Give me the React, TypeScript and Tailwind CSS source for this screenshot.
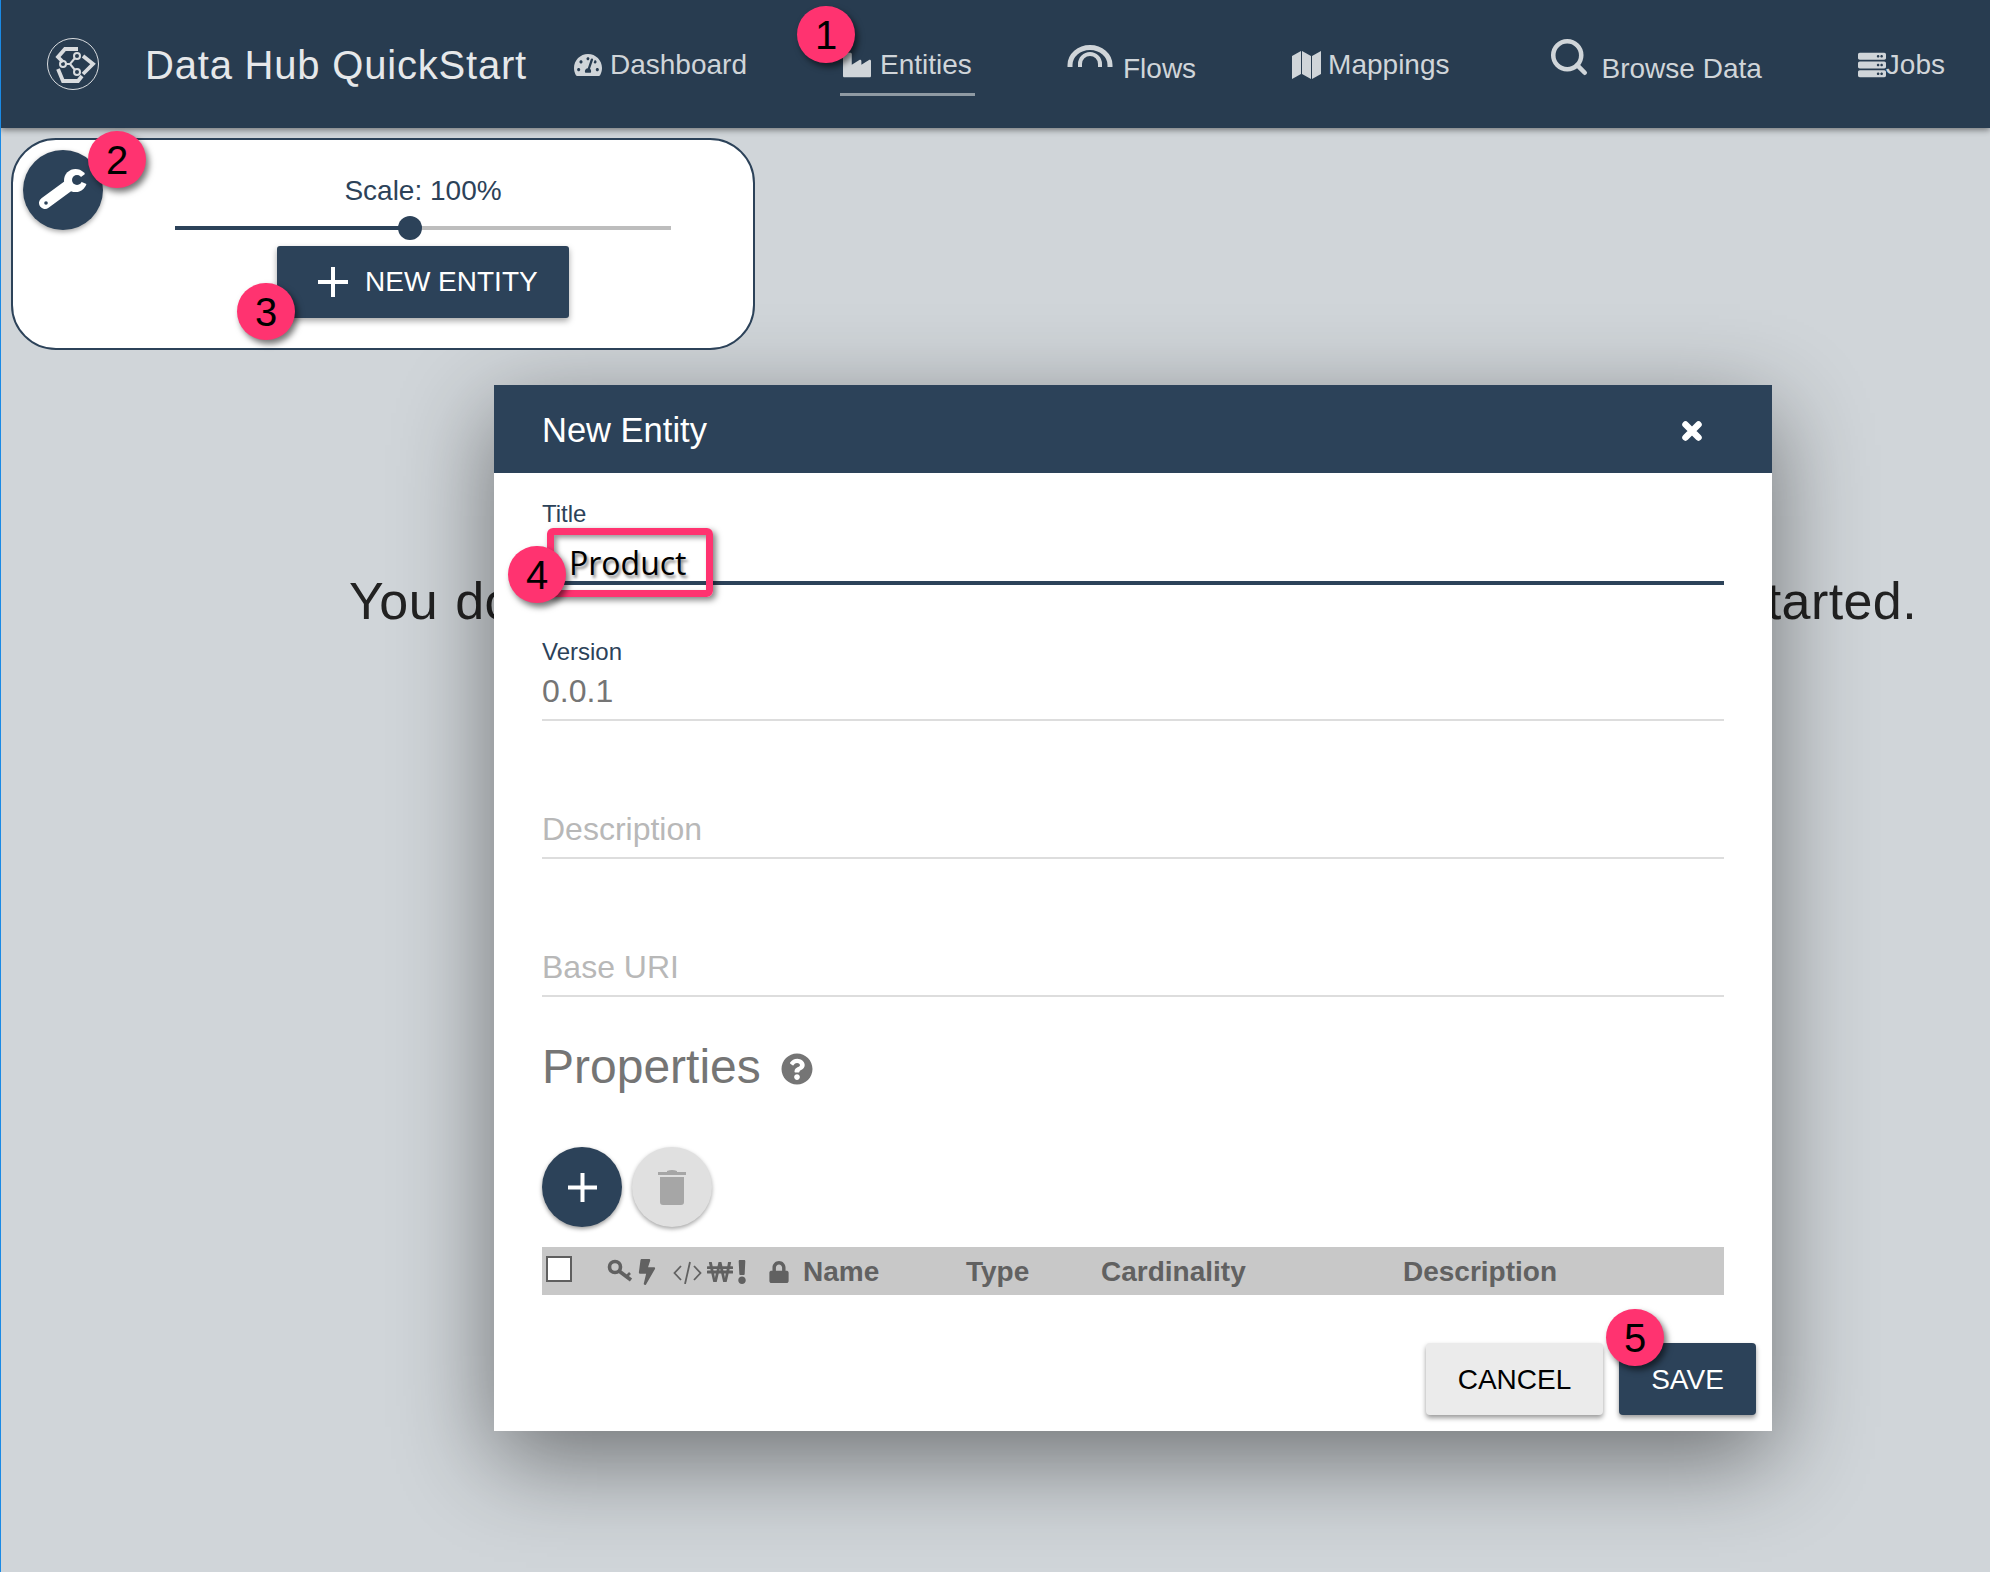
import { Search } from "lucide-react";
import {
  FaBolt,
  FaExclamation,
  FaIndustry,
  FaLock,
  FaQuestionCircle,
  FaServer,
  FaTachometerAlt,
  FaWonSign,
} from "react-icons/fa";

const Badge = ({ n, className }: { n: number; className: string }) => (
  <div
    className={`absolute z-30 w-[58px] h-[57px] rounded-full bg-[#ff3370] flex items-center justify-center text-[40px] leading-none text-black shadow-[3px_4px_6px_rgba(0,0,0,0.55)] ${className}`}
  >
    {n}
  </div>
);

const PlusMark = ({ size, thick }: { size: number; thick: number }) => (
  <svg width={size} height={size} viewBox={`0 0 ${size} ${size}`} fill="#ffffff">
    <rect x={0} y={(size - thick) / 2} width={size} height={thick} />
    <rect x={(size - thick) / 2} y={0} width={thick} height={size} />
  </svg>
);

const Logo = () => (
  <svg width="52" height="52" viewBox="0 0 52 52" fill="none" stroke="#d9dcdf" className="ml-[46px] mb-[2px] shrink-0">
    <circle cx="26" cy="26" r="25.5" strokeWidth="1" />
    <g strokeWidth="3.8">
      <path d="M16 24 L11 19 L18 11 H31" />
      <path d="M36 18 L46 26 L36 36" />
      <path d="M11 31 L16 43 H31 L35 38" />
    </g>
    <g strokeWidth="2">
      <circle cx="30" cy="18" r="3" />
      <circle cx="16" cy="26" r="3" />
      <circle cx="30" cy="34" r="3" />
      <path d="M19 26 H23 L28 20 M23 26 L28 32" />
    </g>
  </svg>
);

const FlowsIcon = () => (
  <svg width="46" height="22" viewBox="0 0 46 22" fill="none" stroke="#d0d5d9" className="mb-[18px] shrink-0">
    <path d="M3 22 V20 A20 17.5 0 0 1 43 20 V22" strokeWidth="5" />
    <path d="M13 22 V19 A10 10 0 0 1 33 19 V22" strokeWidth="4" />
  </svg>
);

const MapIcon = () => (
  <svg width="29" height="28" viewBox="0 0 29 28" fill="#d0d5d9" className="shrink-0">
    <path d="M0 5 L9 0 V23 L0 28 Z" />
    <path d="M10 0 L19 5 V28 L10 23 Z" />
    <path d="M20 5 L29 0 V23 L20 28 Z" />
  </svg>
);

const WrenchIcon = () => (
  <svg width="48" height="41" viewBox="0 0 48 41" className="mb-[2px]">
    <path d="M36 12 L6 34" stroke="#ffffff" strokeWidth="12" strokeLinecap="round" fill="none" />
    <circle cx="36.5" cy="11.5" r="11.5" fill="#ffffff" />
    <path d="M38 11 L50 2 L52 17 Z" fill="#2c4259" />
    <circle cx="38" cy="11" r="5" fill="#2c4259" />
    <circle cx="7" cy="34" r="1.8" fill="#2c4259" />
  </svg>
);

const CloseIcon = () => (
  <svg width="20" height="20" viewBox="0 0 20 20" fill="none" stroke="#ffffff" strokeWidth="6.5" strokeLinecap="round" className="mt-[1px]">
    <path d="M3.5 3.5 L16.5 16.5 M16.5 3.5 L3.5 16.5" />
  </svg>
);

const KeyIcon = () => (
  <svg width="27" height="24" viewBox="0 0 27 24" fill="none" stroke="#616161" className="ml-[35px] mb-[2px] shrink-0">
    <circle cx="8" cy="8" r="5.5" strokeWidth="3.6" />
    <path d="M12 12 L24 21" strokeWidth="3.8" />
    <path d="M20 17 L23 14" strokeWidth="2.6" />
  </svg>
);

const CodeIcon = () => (
  <svg width="29" height="24" viewBox="0 0 29 24" fill="none" stroke="#616161" strokeWidth="1.8" className="ml-[13px] shrink-0">
    <path d="M8 6 L1.5 13 L8 20" />
    <path d="M21 6 L27.5 13 L21 20" />
    <path d="M17 2 L12 24" />
  </svg>
);

const TrashIcon = () => (
  <svg width="28" height="36" viewBox="0 0 28 36" fill="#a6a6a6">
    <path d="M9 2 Q14 0 19 2 L19 3 H28 V6 H0 V3 H9 Z" />
    <path d="M2 8 H26 V33 Q26 36 23 36 H5 Q2 36 2 33 Z" />
  </svg>
);

const Field = ({
  label,
  value,
  valueClass,
  lineClass,
}: {
  label?: string;
  value: string;
  valueClass: string;
  lineClass: string;
}) => (
  <div className={`flex flex-col justify-end ${lineClass}`}>
    {label && <div className="text-[24px] leading-[28px] text-[#2c4259] mb-auto">{label}</div>}
    <div className={valueClass}>{value}</div>
  </div>
);

const App = () => {
  return (
    <div className="relative w-[1990px] h-[1572px] overflow-hidden bg-[#d0d5d9] border-l border-[#1a8ae5] font-['Liberation_Sans',Arial,sans-serif]">
      <nav className="relative z-10 flex items-center h-[128px] pt-[2px] bg-[#283c50] text-[#d0d5d9] text-[28px] shadow-[0_2px_6px_rgba(0,0,0,0.45)]">
        <Logo />
        <div className="w-[475px] pl-[46px] text-[40px] tracking-[0.8px] text-[#e6e8ea] shrink-0 whitespace-nowrap">
          Data Hub QuickStart
        </div>
        <div className="flex items-center gap-[8px]">
          <FaTachometerAlt size={28} />
          <span>Dashboard</span>
        </div>
        <div className="flex items-center self-start ml-[93px] mt-[38px] w-[135px] h-[56px] pl-[3px] pb-[4px] gap-[9px] border-b-[3px] border-[#8f9aa3]">
          <FaIndustry size={28} />
          <span>Entities</span>
        </div>
        <div className="flex items-center ml-[92px] gap-[10px]">
          <FlowsIcon />
          <span className="mt-[8px]">Flows</span>
        </div>
        <div className="flex items-center ml-[96px] gap-[7px]">
          <MapIcon />
          <span>Mappings</span>
        </div>
        <div className="flex items-center ml-[98px] gap-[12px]">
          <Search size={42} strokeWidth={2.6} className="mb-[16px]" />
          <span className="mt-[8px]">Browse Data</span>
        </div>
        <div className="flex items-center ml-[96px]">
          <FaServer size={28} />
          <span>Jobs</span>
        </div>
      </nav>

      <div className="relative z-30 flex flex-col items-center w-[744px] h-[212px] ml-[10px] mt-[10px] pl-[80px] pt-[35px] bg-white border-2 border-[#2c4259] rounded-[45px]">
        <div className="absolute left-[10px] top-[10px] flex items-center justify-center w-[80px] h-[80px] rounded-full bg-[#2c4259] shadow-[0_2px_5px_rgba(0,0,0,0.35)]">
          <WrenchIcon />
        </div>
        <div className="text-[28px] leading-[32px] text-[#2c4259]">Scale: 100%</div>
        <div className="relative flex items-center w-[496px] h-[24px] mt-[9px]">
          <div className="w-[235px] h-[4px] bg-[#2c4259]" />
          <div className="flex-1 h-[4px] bg-[#bdbdbd]" />
          <div className="absolute left-[223px] top-0 w-[24px] h-[24px] rounded-full bg-[#2c4259]" />
        </div>
        <div className="flex items-center w-[292px] h-[72px] mt-[6px] pl-[41px] gap-[17px] rounded-[3px] bg-[#2c4259] text-white text-[28px] shadow-[0_3px_6px_rgba(0,0,0,0.35)]">
          <PlusMark size={30} thick={4} />
          <span>NEW ENTITY</span>
        </div>
      </div>

      <div className="ml-[348px] mt-[221px] w-[1568px] text-[52px] leading-[60px] tracking-[0.4px] text-[#222222] whitespace-nowrap [text-align-last:justify]">
        You don't have any entities. Click New Entity button to get started.
      </div>

      <div className="absolute z-20 left-[493px] top-[385px] w-[1278px] h-[1046px] flex flex-col bg-white shadow-[0_28px_90px_rgba(0,0,0,0.47)]">
        <div className="flex items-center justify-between h-[88px] shrink-0 pl-[48px] pr-[70px] pt-[3px] bg-[#2c4259] text-white text-[34.5px]">
          <span>New Entity</span>
          <CloseIcon />
        </div>

        <div className="flex flex-col px-[48px] pt-[27px]">
          <Field
            label="Title"
            value="Product"
            lineClass="h-[85px] border-b-4 border-[#2c4259]"
            valueClass="pl-[27px] text-[32px] leading-[36px] text-black font-['Open_Sans',sans-serif] [text-shadow:2px_3px_3px_rgba(0,0,0,0.45)]"
          />
          <Field
            label="Version"
            value="0.0.1"
            lineClass="h-[83px] mt-[53px] border-b-2 border-[#dddddd]"
            valueClass="text-[32px] leading-[40px] pb-[8px] text-[#757575]"
          />
          <Field
            value="Description"
            lineClass="h-[83px] mt-[55px] border-b-2 border-[#dddddd]"
            valueClass="text-[32px] leading-[40px] pb-[8px] text-[#b8b8b8]"
          />
          <Field
            value="Base URI"
            lineClass="h-[83px] mt-[55px] border-b-2 border-[#dddddd]"
            valueClass="text-[32px] leading-[40px] pb-[8px] text-[#b8b8b8]"
          />

          <div className="flex items-center mt-[41px] h-[58px] gap-[20px] text-[48px] text-[#757575]">
            <span>Properties</span>
            <FaQuestionCircle size={32} className="mt-[3px]" />
          </div>

          <div className="flex items-center mt-[51px] gap-[10px]">
            <div className="flex items-center justify-center w-[80px] h-[80px] rounded-full bg-[#2c4259] shadow-[0_2px_4px_rgba(0,0,0,0.4)]">
              <PlusMark size={29} thick={4} />
            </div>
            <div className="flex items-center justify-center w-[80px] h-[80px] rounded-full bg-[#e0e0e0] shadow-[0_2px_4px_rgba(0,0,0,0.35)]">
              <TrashIcon />
            </div>
          </div>

          <div className="flex items-center h-[48px] mt-[20px] pl-[4px] pt-[1px] bg-[#c8c8c8] text-[28px] font-bold text-[#616161]">
            <div className="w-[26px] h-[26px] mb-[6px] bg-white border-2 border-[#5f5f5f] shrink-0" />
            <KeyIcon />
            <FaBolt size={26} className="shrink-0" />
            <CodeIcon />
            <FaWonSign size={26} className="ml-[5px] shrink-0" />
            <FaExclamation size={24} className="-ml-[3px] shrink-0" />
            <FaLock size={22} className="ml-[14px] shrink-0" />
            <span className="ml-[13px] w-[163px] shrink-0">Name</span>
            <span className="w-[135px] shrink-0">Type</span>
            <span className="w-[302px] shrink-0">Cardinality</span>
            <span>Description</span>
          </div>
        </div>

        <div className="flex justify-end gap-[16px] mt-[48px] pr-[16px] text-[28px]">
          <div className="flex items-center justify-center w-[177px] h-[72px] pt-[1px] rounded-[4px] bg-[#ebebeb] text-black shadow-[0_3px_5px_rgba(0,0,0,0.4)]">
            CANCEL
          </div>
          <div className="flex items-center justify-center w-[137px] h-[72px] pt-[1px] rounded-[4px] bg-[#2c4259] text-white shadow-[0_3px_5px_rgba(0,0,0,0.4)]">
            SAVE
          </div>
        </div>

        <div className="absolute left-[53px] top-[143px] w-[166px] h-[69px] rounded-[6px] border-[7px] border-[#ff3370] shadow-[3px_3px_6px_rgba(0,0,0,0.5),inset_3px_3px_5px_rgba(0,0,0,0.4)]" />
      </div>

      <Badge n={1} className="left-[796px] top-[6px]" />
      <Badge n={2} className="left-[87px] top-[131px]" />
      <Badge n={3} className="left-[236px] top-[283px]" />
      <Badge n={4} className="left-[507px] top-[546px]" />
      <Badge n={5} className="left-[1605px] top-[1309px]" />
    </div>
  );
};

export default App;
